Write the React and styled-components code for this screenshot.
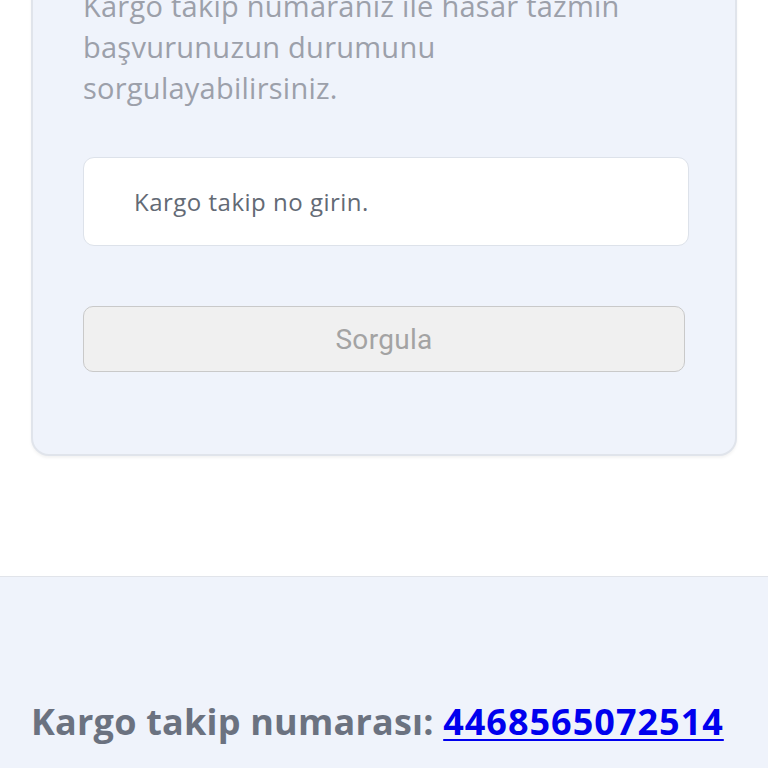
import React from 'react';
import styled, { createGlobalStyle } from 'styled-components';

const GlobalStyle = createGlobalStyle`
  html, body {
    margin: 0;
    padding: 0;
    background: #ffffff;
  }
  body {
    font-family: 'Open Sans', 'Noto Sans', sans-serif;
    overflow: hidden;
  }
`;

const Page = styled.div`
  display: flex;
  flex-direction: column;
  width: 768px;
  height: 768px;
  overflow: hidden;
`;

const Main = styled.main`
  padding: 0 31px 120px 31px;
  background: #ffffff;
`;

const Card = styled.section`
  margin-top: -40px;
  width: 706px;
  box-sizing: border-box;
  background: #eff3fb;
  border: 2px solid #e0e4eb;
  border-radius: 18px;
  box-shadow: 0 2px 3px rgba(0, 0, 0, 0.05);
  padding: 23px 50px 82px 50px;
`;

const Description = styled.p`
  margin: 0;
  font-size: 29px;
  line-height: 41px;
  color: #9ca0aa;
  letter-spacing: 0.25px;
`;

const Input = styled.input`
  display: block;
  margin-top: 49px;
  width: 606px;
  height: 89px;
  box-sizing: border-box;
  border: 1.5px solid #dde2ea;
  border-radius: 11px;
  background: #ffffff;
  padding: 0 0 0 50px;
  font-family: 'Open Sans', 'Noto Sans', sans-serif;
  font-size: 24px;
  letter-spacing: 0.5px;
  color: #374151;
  outline: none;

  &::placeholder {
    color: #636a75;
  }
`;

const Button = styled.button`
  display: block;
  margin-top: 60px;
  width: 602px;
  height: 66px;
  box-sizing: border-box;
  background: #f0f0f0;
  border: 1.5px solid #c9c9c9;
  border-radius: 10px;
  font-family: Roboto, 'Liberation Sans', sans-serif;
  font-size: 28px;
  letter-spacing: 0.3px;
  color: #a3a3a3;
`;

const Footer = styled.footer`
  flex: 1;
  background: #eff3fb;
  border-top: 1.5px solid #e1e4ea;
  padding: 120px 31px 0 31px;
`;

const TrackLine = styled.p`
  margin: 0;
  font-size: 36px;
  font-weight: 700;
  color: #6b7280;
  letter-spacing: 0.2px;
  white-space: nowrap;
`;

const TrackLink = styled.a`
  color: #0000ee;
  letter-spacing: 1px;
  text-decoration: underline;
  text-decoration-thickness: 2px;
  text-underline-offset: 4px;
`;

export default function App() {
  return (
    <Page>
      <GlobalStyle />
      <Main>
        <Card>
          <Description>
            Kargo takip numaranız ile hasar tazmin başvurunuzun durumunu sorgulayabilirsiniz.
          </Description>
          <Input placeholder="Kargo takip no girin." />
          <Button type="button">Sorgula</Button>
        </Card>
      </Main>
      <Footer>
        <TrackLine>
          Kargo takip numarası: <TrackLink href="#">4468565072514</TrackLink>
        </TrackLine>
      </Footer>
    </Page>
  );
}
